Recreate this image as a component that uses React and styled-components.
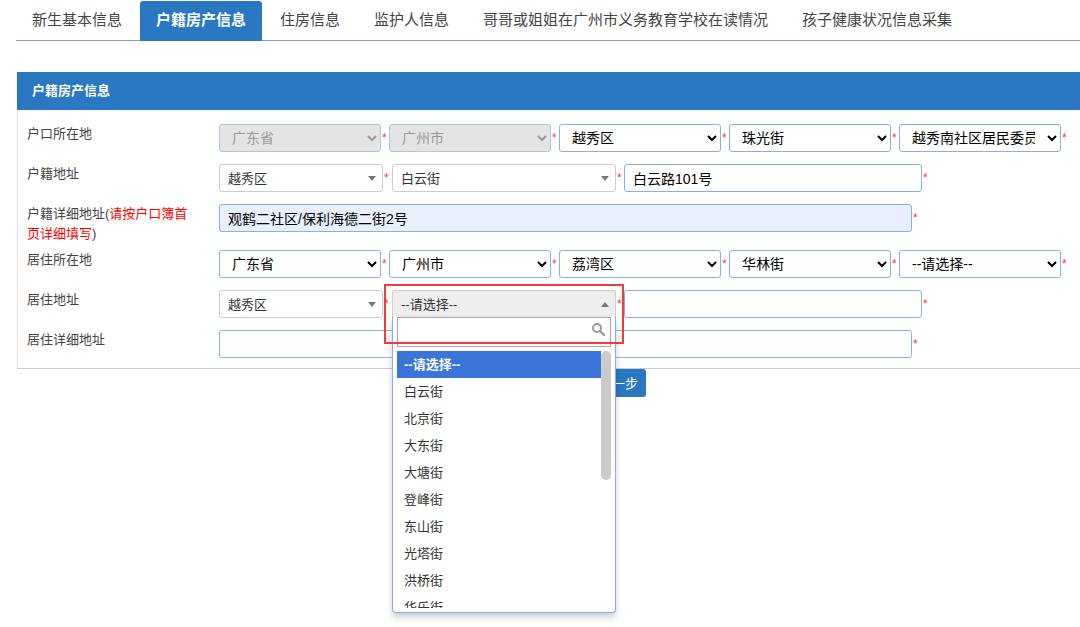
import React from 'react';
import styled, { createGlobalStyle, css } from 'styled-components';

const GlobalStyle = createGlobalStyle`
    * {
        box-sizing: border-box;
    }
    body {
        margin: 0;
        background: #fff;
        color: #444;
        font-family: "Liberation Sans", "Noto Sans CJK SC", sans-serif;
        font-size: 13px;
        line-height: 20px;
    }
`;

const Page = styled.main`
    min-height: 100vh;
    padding: 1px 0 0 16px;
`;

const Tabs = styled.nav`
    display: flex;
    gap: 2px;
    margin-bottom: 31px;
    border-bottom: 1px solid #74a5d8;
`;

const Tab = styled.a`
    flex: none;
    height: 40px;
    margin-bottom: -1px;
    padding: 0 16px;
    border-radius: 3px 3px 0 0;
    color: #444;
    font-size: 15px;
    line-height: 38px;
    text-decoration: none;
    ${({ $active }) => $active && css`
        background: #2a77c2;
        color: #fff;
        font-weight: bold;
    `}
`;

const Panel = styled.section`
    margin-left: 1px;
    border-bottom: 1px solid #ccc;
`;

const PanelTitle = styled.h1`
    margin: 0;
    padding: 0 15px;
    background: #2a77c2;
    color: #fff;
    font-size: 13px;
    line-height: 38px;
`;

const Form = styled.form`
    display: flex;
    flex-direction: column;
    gap: 6px;
    padding: 14px 0 4px 9px;
    border-left: 1px solid #ddd;
`;

const Row = styled.div`
    display: grid;
    grid-template-columns: 168px 1fr;
    column-gap: 24px;
    min-height: 34px;
`;

const Label = styled.label`
    color: #444;
    em {
        color: #f00;
        font-style: normal;
    }
`;

const Controls = styled.div`
    display: flex;
    align-items: flex-start;
`;

const Required = styled.span`
    flex: none;
    width: ${({ $wide }) => ($wide ? '9px' : '8px')};
    padding-left: 1px;
    color: #f33;
    font-size: 12px;
    line-height: 28px;
`;

const controlBase = css`
    height: 28px;
    border: 1px solid #84b2e2;
    border-radius: 3px;
    background: #fff;
    color: #000;
    font-family: inherit;
    font-size: 14px;
`;

const NativeSelect = styled.select`
    ${controlBase}
    flex: 0 1 162px;
    min-width: 0;
    padding: 0 9px 0 8px;
    &:disabled {
        border-color: #a9c8e8;
        background: #e4e4e4;
        color: #999;
        opacity: 1;
    }
`;

const TextInput = styled.input`
    ${controlBase}
    flex: 0 1 ${({ $width }) => $width};
    min-width: 0;
    padding: 0 8px;
    background: ${({ $filled }) => ($filled ? '#e8effd' : '#fff')};
`;

const SearchSelectBox = styled.div`
    position: relative;
    flex: 0 1 ${({ $width }) => $width};
`;

const searchSelectBase = css`
    ${controlBase}
    display: block;
    width: 100%;
    padding: 0 24px 0 8px;
    border-color: #ccc;
    color: #333;
    font-size: 13px;
    text-align: left;
`;

const SearchSelect = styled.select`
    ${searchSelectBase}
    appearance: none;
`;

const OpenTrigger = styled.button`
    ${searchSelectBase}
    padding-bottom: 2px;
    border-bottom-color: #eee;
    border-radius: 3px 3px 0 0;
    background: #eee;
`;

const Caret = styled.svg`
    position: absolute;
    top: 12px;
    right: 7px;
    width: 8px;
    height: 5px;
    fill: #777;
    pointer-events: none;
`;

const Dropdown = styled.div`
    position: absolute;
    z-index: 2;
    top: 27px;
    left: 0;
    right: 0;
    padding: 0 4px 4px;
    border: 1px solid #84aff8;
    border-top: 0;
    border-radius: 0 0 4px 4px;
    background: #fff;
    box-shadow: 0 4px 6px rgba(0, 0, 0, 0.2);
`;

const SearchField = styled.div`
    position: relative;
    margin-bottom: 4px;
    input {
        display: block;
        width: 100%;
        height: 30px;
        padding: 0 24px 0 6px;
        border: 1px solid #aaa;
        outline: 0;
        font-size: 13px;
    }
    svg {
        position: absolute;
        top: 5px;
        right: 5px;
        width: 15px;
        height: 15px;
    }
`;

const ResultArea = styled.div`
    display: flex;
    height: 257px;
    overflow: hidden;
`;

const Results = styled.ul`
    flex: 1;
    margin: 0;
    padding: 0;
    list-style: none;
`;

const Result = styled.li`
    padding: 0 7px;
    color: #333;
    line-height: 27px;
    &[aria-selected='true'] {
        background: #3a75d7;
        color: #fff;
        font-weight: bold;
    }
`;

const ScrollThumb = styled.div`
    width: 10px;
    height: 50%;
    border-radius: 5px;
    background: #cacaca;
`;

const Highlight = styled.div`
    position: absolute;
    z-index: 3;
    top: -6px;
    left: -8px;
    right: -8px;
    height: 60px;
    border: 2px solid #f93838;
    pointer-events: none;
`;

const Actions = styled.div`
    padding-left: 575px;
`;

const NextButton = styled.button`
    height: 28px;
    padding: 0 8px 2px;
    border: 0;
    border-radius: 3px;
    background: #2a77c2;
    color: #fff;
    font-family: inherit;
    font-size: 13px;
`;

const tabs = [
    '新生基本信息',
    '户籍房产信息',
    '住房信息',
    '监护人信息',
    '哥哥或姐姐在广州市义务教育学校在读情况',
    '孩子健康状况信息采集',
];

const registered = ['广东省', '广州市', '越秀区', '珠光街', '越秀南社区居民委员会'];
const residence = ['广东省', '广州市', '荔湾区', '华林街', '--请选择--'];

const streets = [
    '--请选择--',
    '白云街',
    '北京街',
    '大东街',
    '大塘街',
    '登峰街',
    '东山街',
    '光塔街',
    '洪桥街',
    '华乐街',
];

function RegionSelects({ id, values, locked = 0 }) {
    return (
        <Controls>
            {values.map((value, i) => (
                <React.Fragment key={value}>
                    <NativeSelect
                        id={i === 0 ? id : undefined}
                        aria-label={i === 0 ? undefined : value}
                        disabled={i < locked}
                    >
                        <option>{value}</option>
                    </NativeSelect>
                    <Required>*</Required>
                </React.Fragment>
            ))}
        </Controls>
    );
}

function ClosedSelect({ id, value, width }) {
    return (
        <SearchSelectBox $width={width}>
            <SearchSelect id={id} aria-label={id ? undefined : value}>
                <option>{value}</option>
            </SearchSelect>
            <Caret viewBox="0 0 8 5"><path d="M0 0h8L4 5z" /></Caret>
        </SearchSelectBox>
    );
}

function StreetPicker() {
    return (
        <SearchSelectBox $width="224px">
            <OpenTrigger type="button" aria-haspopup="listbox" aria-expanded="true">
                --请选择--
            </OpenTrigger>
            <Caret viewBox="0 0 8 5"><path d="M0 5h8L4 0z" /></Caret>
            <Dropdown>
                <SearchField>
                    <input type="text" aria-label="搜索" />
                    <svg viewBox="0 0 15 15" fill="none" stroke="#999">
                        <circle cx="6" cy="6" r="4" strokeWidth="2" />
                        <path d="M9 9l4 4" strokeWidth="2.4" strokeLinecap="round" />
                    </svg>
                </SearchField>
                <ResultArea>
                    <Results role="listbox" aria-label="街道">
                        {streets.map((street, i) => (
                            <Result key={street} role="option" aria-selected={i === 0}>
                                {street}
                            </Result>
                        ))}
                    </Results>
                    <ScrollThumb />
                </ResultArea>
            </Dropdown>
            <Highlight />
        </SearchSelectBox>
    );
}

function App() {
    return (
        <Page>
            <GlobalStyle />
            <Tabs>
                {tabs.map((tab, i) => (
                    <Tab key={tab} href="#" $active={i === 1}>{tab}</Tab>
                ))}
            </Tabs>
            <Panel>
                <PanelTitle>户籍房产信息</PanelTitle>
                <Form>
                    <Row>
                        <Label htmlFor="hk-region">户口所在地</Label>
                        <RegionSelects id="hk-region" values={registered} locked={2} />
                    </Row>
                    <Row>
                        <Label htmlFor="hj-district">户籍地址</Label>
                        <Controls>
                            <ClosedSelect id="hj-district" value="越秀区" width="164px" />
                            <Required $wide>*</Required>
                            <ClosedSelect value="白云街" width="224px" />
                            <Required>*</Required>
                            <TextInput aria-label="路名门牌" defaultValue="白云路101号" $width="298px" />
                            <Required>*</Required>
                        </Controls>
                    </Row>
                    <Row>
                        <Label htmlFor="hj-detail">
                            户籍详细地址(<em>请按户口簿首页详细填写</em>)
                        </Label>
                        <Controls>
                            <TextInput
                                id="hj-detail"
                                defaultValue="观鹤二社区/保利海德二街2号"
                                $width="693px"
                                $filled
                            />
                            <Required>*</Required>
                        </Controls>
                    </Row>
                    <Row>
                        <Label htmlFor="jz-region">居住所在地</Label>
                        <RegionSelects id="jz-region" values={residence} />
                    </Row>
                    <Row>
                        <Label htmlFor="jz-district">居住地址</Label>
                        <Controls>
                            <ClosedSelect id="jz-district" value="越秀区" width="164px" />
                            <Required $wide>*</Required>
                            <StreetPicker />
                            <Required>*</Required>
                            <TextInput aria-label="路名门牌" $width="298px" />
                            <Required>*</Required>
                        </Controls>
                    </Row>
                    <Row>
                        <Label htmlFor="jz-detail">居住详细地址</Label>
                        <Controls>
                            <TextInput id="jz-detail" $width="693px" />
                            <Required>*</Required>
                        </Controls>
                    </Row>
                </Form>
            </Panel>
            <Actions>
                <NextButton type="button">下一步</NextButton>
            </Actions>
        </Page>
    );
}

export default App;
